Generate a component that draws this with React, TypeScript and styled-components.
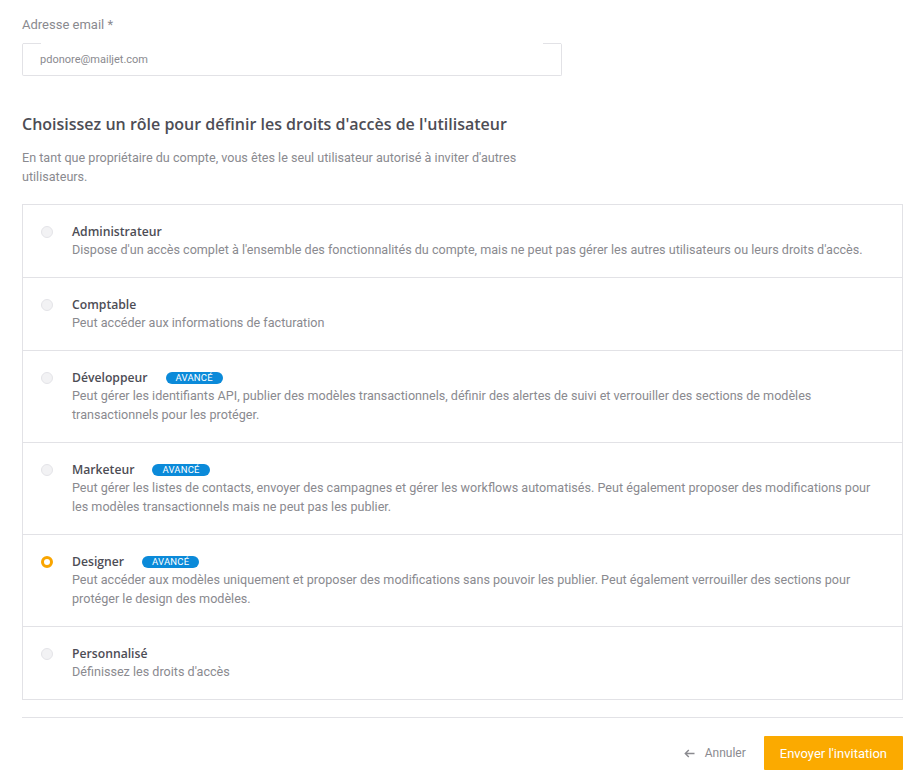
import { FC } from "react";
import styled, { createGlobalStyle } from "styled-components";

const GlobalStyle = createGlobalStyle`
  body {
    margin: 0;
    background: #ffffff;
    font-family: Roboto, "Liberation Sans", sans-serif;
  }
`;

const Page = styled.div`
  width: 881px;
  padding: 16px 18px 13px 22px;
`;

const FieldLabel = styled.label`
  display: block;
  font-size: 13px;
  line-height: 18px;
  color: #8a8a8f;
  margin-bottom: 9px;
`;

const InputBox = styled.div`
  position: relative;
  width: 540px;
  height: 33px;
  box-sizing: border-box;
  border: 1px solid #e2e2e6;
  border-top-color: transparent;
  border-radius: 2px;
  display: flex;
  align-items: center;
  padding-left: 17px;
  font-size: 11px;
  color: #8a8a8f;

  &::before,
  &::after {
    content: "";
    position: absolute;
    top: -1px;
    width: 18px;
    height: 1px;
    background: #e2e2e6;
  }
  &::before {
    left: 0;
  }
  &::after {
    right: 0;
  }
`;

const Heading = styled.h2`
  margin: 36px 0 0;
  font-family: "Open Sans", "Noto Sans", sans-serif;
  font-size: 16px;
  font-weight: 600;
  line-height: 24px;
  color: #4d4d55;
`;

const Intro = styled.p`
  margin: 12px 0 18px;
  max-width: 520px;
  font-size: 12.6px;
  line-height: 19px;
  color: #8a8a8f;
`;

const RoleList = styled.div`
  border: 1px solid #e2e2e6;
`;

const RoleRow = styled.div`
  display: flex;
  align-items: flex-start;
  padding: 18px;
  border-top: 1px solid #e2e2e6;

  &:first-child {
    border-top: none;
  }
`;

const Radio = styled.span<{ $checked?: boolean }>`
  flex: none;
  width: 12px;
  height: 12px;
  margin-top: 3px;
  margin-right: 19px;
  box-sizing: border-box;
  border-radius: 50%;
  background: ${(p) => (p.$checked ? "#ffffff" : "#f2f2f4")};
  border: ${(p) => (p.$checked ? "3.5px solid #f9a500" : "1px solid #e4e4e8")};
`;

const RoleBody = styled.div`
  flex: 1;
`;

const RoleTitle = styled.div`
  display: flex;
  align-items: center;
  height: 17px;
`;

const RoleName = styled.span`
  font-family: "Open Sans", "Noto Sans", sans-serif;
  font-size: 12.2px;
  font-weight: 600;
  color: #4d4d55;
`;

const Badge = styled.span`
  margin-left: 18px;
  padding: 0 10px;
  height: 12px;
  line-height: 12px;
  border-radius: 6px;
  background: #0b8ad9;
  color: #ffffff;
  font-size: 9.5px;
  letter-spacing: 0.2px;
  text-transform: uppercase;
`;

const RoleDesc = styled.div`
  font-size: 12.6px;
  line-height: 19px;
  color: #8a8a8f;
`;

const Divider = styled.hr`
  margin: 17px 0 18px;
  border: none;
  border-top: 1px solid #e2e2e6;
`;

const Footer = styled.div`
  display: flex;
  justify-content: flex-end;
  align-items: center;
  gap: 18px;
`;

const CancelButton = styled.button`
  display: flex;
  align-items: center;
  gap: 10px;
  background: transparent;
  border: none;
  padding: 0;
  font-family: Roboto, "Liberation Sans", sans-serif;
  font-size: 12px;
  color: #8a8a8f;
  cursor: pointer;
`;

const SubmitButton = styled.button`
  height: 34px;
  padding: 0 16px;
  background: #fbaa00;
  border: none;
  border-radius: 1px;
  font-family: Roboto, "Liberation Sans", sans-serif;
  font-size: 13px;
  color: #ffffff;
  cursor: pointer;
`;

interface IRole {
  name: string;
  advanced?: boolean;
  description: string;
  checked?: boolean;
}

const roles: IRole[] = [
  {
    name: "Administrateur",
    description:
      "Dispose d'un accès complet à l'ensemble des fonctionnalités du compte, mais ne peut pas gérer les autres utilisateurs ou leurs droits d'accès.",
  },
  {
    name: "Comptable",
    description: "Peut accéder aux informations de facturation",
  },
  {
    name: "Développeur",
    advanced: true,
    description:
      "Peut gérer les identifiants API, publier des modèles transactionnels, définir des alertes de suivi et verrouiller des sections de modèles transactionnels pour les protéger.",
  },
  {
    name: "Marketeur",
    advanced: true,
    description:
      "Peut gérer les listes de contacts, envoyer des campagnes et gérer les workflows automatisés. Peut également proposer des modifications pour les modèles transactionnels mais ne peut pas les publier.",
  },
  {
    name: "Designer",
    advanced: true,
    checked: true,
    description:
      "Peut accéder aux modèles uniquement et proposer des modifications sans pouvoir les publier. Peut également verrouiller des sections pour protéger le design des modèles.",
  },
  {
    name: "Personnalisé",
    description: "Définissez les droits d'accès",
  },
];

const ArrowLeft: FC = () => (
  <svg width="11" height="9" viewBox="0 0 11 9" fill="none">
    <path
      d="M10.5 4.5H1.5M4.8 1L1.3 4.5L4.8 8"
      stroke="#8a8a8f"
      strokeWidth="1.4"
    />
  </svg>
);

export default function App() {
  return (
    <>
      <GlobalStyle />
      <Page>
        <FieldLabel>Adresse email *</FieldLabel>
        <InputBox>pdonore@mailjet.com</InputBox>

        <Heading>
          Choisissez un rôle pour définir les droits d'accès de l'utilisateur
        </Heading>
        <Intro>
          En tant que propriétaire du compte, vous êtes le seul utilisateur
          autorisé à inviter d'autres utilisateurs.
        </Intro>

        <RoleList>
          {roles.map((role) => (
            <RoleRow key={role.name}>
              <Radio $checked={role.checked} />
              <RoleBody>
                <RoleTitle>
                  <RoleName>{role.name}</RoleName>
                  {role.advanced && <Badge>Avancé</Badge>}
                </RoleTitle>
                <RoleDesc>{role.description}</RoleDesc>
              </RoleBody>
            </RoleRow>
          ))}
        </RoleList>

        <Divider />

        <Footer>
          <CancelButton>
            <ArrowLeft />
            Annuler
          </CancelButton>
          <SubmitButton>Envoyer l'invitation</SubmitButton>
        </Footer>
      </Page>
    </>
  );
}
